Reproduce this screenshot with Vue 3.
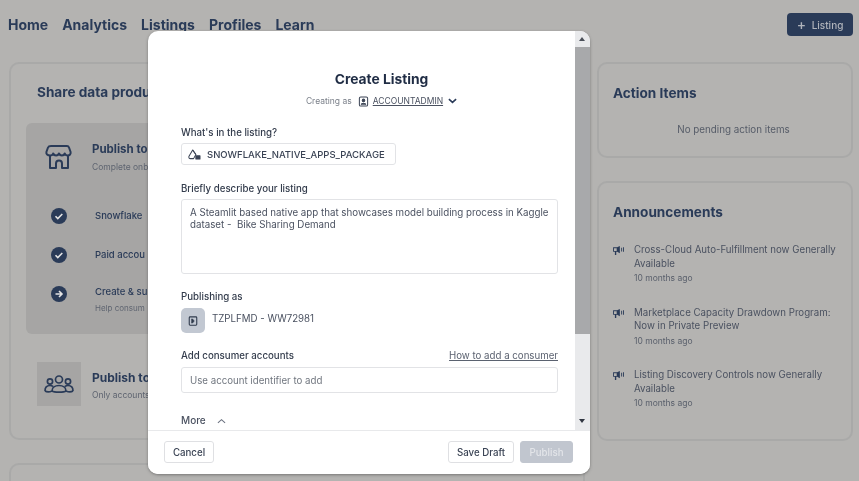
<script setup>
// labels on the left stop where the modal covers them
const steps = [
  { icon: 'check', title: 'Snowflake', sub: '' },
  { icon: 'check', title: 'Paid accou', sub: '' },
  { icon: 'arrow', title: 'Create & su', sub: 'Help consum' }
]

const news = [
  'Cross-Cloud Auto-Fulfillment now Generally Available',
  'Marketplace Capacity Drawdown Program: Now in Private Preview',
  'Listing Discovery Controls now Generally Available'
]

const tabs = ['Home', 'Analytics', 'Listings', 'Profiles', 'Learn']
</script>

<template>
  <div class="page">
    <header class="topbar">
      <nav class="tabs">
        <a v-for="t in tabs" :key="t">{{ t }}</a>
      </nav>
      <button class="btn-new"><span class="plus">+</span> Listing</button>
    </header>

    <main class="columns">
      <section class="left">
        <div class="card share">
          <h2 class="share-title">Share data produ</h2>
          <div class="panel">
            <div class="panel-head">
              <svg class="store" viewBox="0 0 26 24" fill="none" stroke="#2a3b58" stroke-width="2" stroke-linejoin="round">
                <path d="M5 1h16c1 0 1.600.5 2 1.500l1.600 4.500c.4 2-1 3.500-2.800 3.500-1.600 0-2.600-.8-3-2-.5 1.200-1.500 2-2.900 2s-2.400-.8-2.900-2c-.5 1.200-1.500 2-2.900 2s-2.400-.8-2.900-2c-.4 1.200-1.400 2-3 2C1.400 10.500 0 9 .4 7L2 2.500C2.400 1.500 4 1 5 1z" />
                <path d="M4 11v12h6v-4.500a3 3 0 0 1 6 0V23h6V11" />
              </svg>
              <div>
                <div class="panel-title">Publish to</div>
                <div class="panel-sub">Complete onb</div>
              </div>
            </div>
            <div v-for="s in steps" :key="s.title" class="step">
              <svg class="step-icon" viewBox="0 0 16 16">
                <circle cx="8" cy="8" r="8" fill="#2a3b58" />
                <path v-if="s.icon === 'check'" d="M4.500 8.200l2.300 2.300 4.500-4.500" fill="none" stroke="#e4e4e4" stroke-width="1.600" />
                <path v-else d="M4.500 8h6.500M8 5l3 3-3 3" fill="none" stroke="#e4e4e4" stroke-width="1.600" />
              </svg>
              <div :class="{ 'has-sub': s.sub }">
                <div class="step-title">{{ s.title }}</div>
                <div v-if="s.sub" class="step-sub">{{ s.sub }}</div>
              </div>
            </div>
          </div>
          <div class="private">
            <div class="people-box">
              <svg viewBox="0 0 30 18" width="30" height="18" fill="none" stroke="#2a3b58" stroke-width="1.700">
                <circle cx="15" cy="4.500" r="3.500" />
                <circle cx="6" cy="6.500" r="2.600" />
                <circle cx="24" cy="6.500" r="2.600" />
                <path d="M1 16c0-4 2-5.500 5-5.500 1.200 0 2.200.3 3 1M29 16c0-4-2-5.500-5-5.500-1.200 0-2.200.3-3 1M8 16c0-3.500 3-5.500 7-5.500s7 2 7 5.500c-2 1.500-12 1.500-14 0zM1 16c1.500 1 4.500 1.200 7 0M29 16c-1.500 1-4.500 1.200-7 0" />
              </svg>
            </div>
            <div class="private-text">
              <div class="private-title">Publish to</div>
              <div class="private-sub">Only accounts</div>
            </div>
          </div>
        </div>
        <div class="card stub"></div>
      </section>

      <aside class="right">
        <div class="card action">
          <h2>Action Items</h2>
          <p class="empty">No pending action items</p>
        </div>
        <div class="card news">
          <h2>Announcements</h2>
          <div v-for="n in news" :key="n" class="news-item">
            <svg class="mega" viewBox="0 0 12 10" fill="#2a3b58">
              <path d="M0 1.500h4.500l3-1.500v8l-3-1.500H3.500V10H2V6.500H0zM1 2.500v3h3v-3z" fill-rule="evenodd" />
              <path d="M9 2h1v4H9zM11 1.500h1v5h-1z" />
            </svg>
            <div>
              <div class="news-title">{{ n }}</div>
              <div class="news-time">10 months ago</div>
            </div>
          </div>
        </div>
      </aside>
    </main>

    <div class="modal">
      <div class="modal-scroll">
        <div class="modal-body">
          <h1>Create Listing</h1>
          <div class="creating">
            <span class="creating-as">Creating as</span>
            <svg viewBox="0 0 12 12" width="11" height="11" fill="none" stroke="#3a4354" stroke-width="1.100">
              <rect x="1.500" y="1" width="9" height="10" rx="1.500" />
              <circle cx="6" cy="4.800" r="1.400" fill="#3a4354" />
              <path d="M3.500 9.500c0-2 5-2 5 0" fill="#3a4354" />
            </svg>
            <a class="role">ACCOUNTADMIN</a>
            <svg viewBox="0 0 10 6" width="9" height="6" fill="none" stroke="#2a3b58" stroke-width="1.800">
              <path d="M1 1l4 3.500L9 1" />
            </svg>
          </div>

          <label class="lbl first">What's in the listing?</label>
          <div class="chip">
            <svg viewBox="0 0 14 12" width="13" height="11" fill="none" stroke="#3a4354" stroke-width="1.100" stroke-linejoin="round">
              <path d="M5 1L1 8c-.6 1.200.2 2.500 1.500 2.500H6L8.500 6z" />
              <path d="M5 1l3.500 5" />
              <rect x="8.500" y="7.500" width="4.500" height="3.500" fill="#3a4354" />
            </svg>
            <span>SNOWFLAKE_NATIVE_APPS_PACKAGE</span>
          </div>

          <label class="lbl second">Briefly describe your listing</label>
          <div class="area">A Steamlit based native app that showcases model building process in Kaggle dataset -&nbsp; Bike Sharing Demand</div>

          <label class="lbl third">Publishing as</label>
          <div class="publisher">
            <div class="acct-icon">
              <svg viewBox="0 0 12 12" width="10" height="12" fill="none" stroke="#2f3a4c" stroke-width="1.300">
                <rect x="1.500" y="1" width="9" height="10" rx="1" />
                <path d="M4 3.500h1.500l2 2.500-2 2.500H4" fill="#2f3a4c" stroke-width="0.600" />
              </svg>
            </div>
            <span>TZPLFMD - WW72981</span>
          </div>

          <div class="row-label">
            <label class="lbl">Add consumer accounts</label>
            <a class="howto">How to add a consumer</a>
          </div>
          <div class="field">Use account identifier to add</div>

          <div class="more">
            <span>More</span>
            <svg viewBox="0 0 10 6" width="9" height="6" fill="none" stroke="#6b7280" stroke-width="1.200">
              <path d="M1 5l4-3.500L9 5" />
            </svg>
          </div>
        </div>

        <div class="scrollbar">
          <span class="arrow up"></span>
          <div class="thumb"></div>
          <span class="arrow down"></span>
        </div>
      </div>

      <footer class="modal-foot">
        <button class="btn">Cancel</button>
        <div class="foot-right">
          <button class="btn draft">Save Draft</button>
          <button class="btn publish">Publish</button>
        </div>
      </footer>
    </div>
  </div>
</template>

<style>
body { margin: 0; }
</style>

<style scoped>
.page {
  position: relative;
  width: 859px;
  height: 481px;
  overflow: hidden;
  background: #b4b3b1;
  font-family: Inter, "Liberation Sans", sans-serif;
  color: #2a3b58;
  filter: blur(0.35px);
}

.topbar {
  display: flex;
  justify-content: space-between;
  align-items: center;
  height: 49px;
  padding: 0 6px 0 8px;
  margin-bottom: 13px;
}

.tabs { display: flex; gap: 14px; font-size: 14px; font-weight: 700; }

.btn-new {
  width: 66px;
  height: 23px;
  border: none;
  border-radius: 4px;
  background: #2a3b58;
  color: #b0b4bb;
  font: 500 10px Inter, sans-serif;
  padding: 0;
}
.plus { font-size: 14px; margin-right: 3px; vertical-align: -1px; }

.columns { display: flex; gap: 12px; padding: 0 6px 0 9px; }

.left { width: 576px; display: flex; flex-direction: column; gap: 23px; }
.right { width: 256px; display: flex; flex-direction: column; gap: 23px; }

.card {
  box-sizing: border-box;
  border: 2px solid #a9a9a8;
  border-radius: 10px;
}

h2 { margin: 0; font-size: 13.600px; font-weight: 700; line-height: 18px; }

.share { height: 378px; padding: 19px 16px 0 15px; }
.share-title { margin-left: 11px; }

.panel {
  height: 211px;
  margin-top: 22px;
  padding: 19px 20px 0 20px;
  background: #a6a5a4;
  border-radius: 6px;
  box-sizing: border-box;
}
.panel-head { display: flex; gap: 20px; align-items: flex-start; margin-bottom: 35px; }
.store { width: 26px; height: 24px; flex: none; margin-top: 3px; overflow: visible; }
.panel-title { font-size: 11.500px; font-weight: 700; line-height: 14px; }
.panel-sub { font-size: 8.500px; color: #5e6470; line-height: 12px; margin-top: 5px; }

.step { display: flex; gap: 28px; align-items: flex-start; margin: 0 0 23px 5px; min-height: 16px; }
.step-icon { width: 16px; height: 16px; flex: none; }
.step-title { font-size: 9.500px; font-weight: 500; line-height: 16px; }
.has-sub { margin-top: -2px; }
.step-sub { font-size: 8px; color: #5e6470; line-height: 12px; margin-top: 2px; }

.private { display: flex; gap: 11px; margin: 28px 0 0 11px; align-items: center; }
.people-box {
  width: 44px;
  height: 44px;
  flex: none;
  background: #a6a5a4;
  display: flex;
  align-items: center;
  justify-content: center;
}
.private-text { margin-top: 3px; }
.private-title { font-size: 12px; font-weight: 700; line-height: 15px; }
.private-sub { font-size: 8.500px; color: #5e6470; line-height: 12px; margin-top: 4px; }

.stub { height: 60px; }

.action { height: 96px; padding: 20px 15px 0 14px; }
.empty { margin: 22px 0 0; padding-left: 18px; text-align: center; font-size: 9.800px; color: #565c68; line-height: 12px; }

.news { height: 260px; padding: 20px 8px 0 14px; }
.news h2 { margin-bottom: 22px; }
.news-item { display: flex; gap: 10px; margin-bottom: 21.500px; }
.mega { width: 11px; height: 9px; flex: none; margin-top: 3px; }
.news-title { font-size: 9.700px; color: #4a5160; line-height: 13.500px; }
.news-time { font-size: 8.500px; color: #5a606c; line-height: 12px; margin-top: 2px; }

/* modal */
.modal {
  position: absolute;
  left: 148px;
  top: 31px;
  width: 442px;
  height: 443px;
  background: #fff;
  border-radius: 10px;
  overflow: hidden;
  box-shadow: 0 1px 3px rgba(60, 60, 60, 0.5);
  display: flex;
  flex-direction: column;
}

.modal-scroll { flex: 1; display: flex; min-height: 0; }

.modal-body {
  flex: 1;
  padding: 0 17px 0 33px;
  color: #3a4354;
  font-size: 10px;
}

h1 {
  margin: 39px 0 0 24px;
  text-align: center;
  font-size: 13.800px;
  font-weight: 700;
  line-height: 18px;
  color: #1f2c44;
}

.creating {
  display: flex;
  justify-content: center;
  align-items: center;
  gap: 4px;
  margin: 6px 0 0 24px;
  height: 14px;
  font-size: 8.500px;
}
.creating-as { color: #7b808a; margin-right: 2px; }
.role { text-decoration: underline; color: #4a5160; margin-right: 1px; }

.lbl { display: block; font-size: 9.700px; font-weight: 500; line-height: 13px; color: #333c4c; }
.first { margin-top: 18px; }
.second { margin-top: 17px; }
.third { margin-top: 16px; }

.chip {
  display: inline-flex;
  align-items: center;
  gap: 6px;
  box-sizing: border-box;
  height: 22px;
  width: 215px;
  margin-top: 4px;
  padding: 0 6px;
  border: 1px solid #e2e3e6;
  border-radius: 3px;
  font-size: 9.500px;
  font-weight: 500;
  white-space: nowrap;
}

.area {
  box-sizing: border-box;
  height: 75px;
  margin-top: 4px;
  padding: 7px 4px 7px 8px;
  border: 1px solid #e2e3e6;
  border-radius: 3px;
  font-size: 9.750px;
  line-height: 12px;
  color: #4a5160;
}

.publisher { display: flex; gap: 7px; margin-top: 5px; font-size: 9.700px; color: #4a5160; line-height: 22px; }
.acct-icon {
  width: 24px;
  height: 25px;
  background: #c2c8d2;
  border-radius: 5px;
  display: flex;
  align-items: center;
  justify-content: center;
}

.row-label { display: flex; justify-content: space-between; margin-top: 16px; }
.howto { text-decoration: underline; font-size: 9.700px; line-height: 13px; color: #5b6270; }

.field {
  box-sizing: border-box;
  height: 26px;
  margin-top: 5px;
  padding: 0 8px;
  border: 1px solid #e2e3e6;
  border-radius: 3px;
  line-height: 25px;
  font-size: 9.700px;
  color: #70767f;
}

.more { display: flex; align-items: center; gap: 11px; margin-top: 21px; line-height: 13px; font-size: 10px; font-weight: 500; color: #4a5160; }

.scrollbar {
  position: relative;
  width: 15px;
  background: #e9eaec;
}
.thumb { position: absolute; left: 0; right: 0; top: 16px; height: 287px; background: #a8a9ab; }
.arrow {
  position: absolute;
  left: 4px;
  width: 0;
  height: 0;
  border-left: 3px solid transparent;
  border-right: 3px solid transparent;
}
.up { top: 6px; border-bottom: 4px solid #4a4f58; }
.down { bottom: 7px; border-top: 4px solid #2f3540; }

.modal-foot {
  height: 44px;
  box-sizing: border-box;
  padding: 10px 17px 0 16px;
  border-top: 1px solid #e8e9eb;
  display: flex;
  justify-content: space-between;
  background: #fff;
}
.foot-right { display: flex; gap: 6px; }

.btn {
  height: 22px;
  padding: 0;
  width: 50px;
  border: 1px solid #dfe0e3;
  border-radius: 3px;
  background: #fff;
  color: #3a4354;
  font: 500 9.700px Inter, sans-serif;
}
.draft { width: 66px; }
.publish { width: 53px; background: #c1c6cf; border-color: #c1c6cf; color: #e3e5e9; }
</style>
